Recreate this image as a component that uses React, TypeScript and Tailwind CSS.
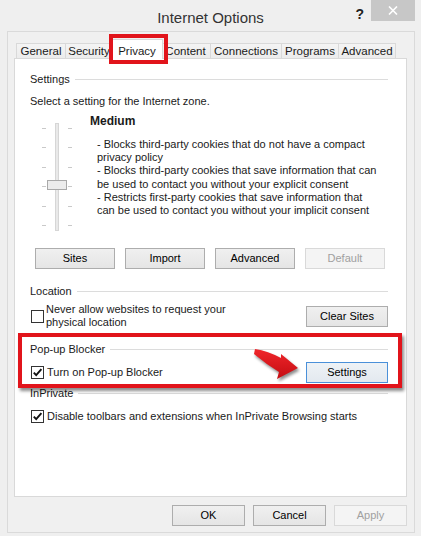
import React from 'react';

const font = "font-['Liberation_Sans',Arial,sans-serif]";

const tabs = ['General', 'Security', 'Privacy', 'Content', 'Connections', 'Programs', 'Advanced'];
const tabWidths: Record<string, string> = {
    General: 'w-[50px]',
    Security: 'w-[48px]',
    Privacy: 'w-[52px]',
    Content: 'w-[51px]',
    Connections: 'w-[72px]',
    Programs: 'w-[58px]',
    Advanced: 'w-[58px]',
};

const GroupHeader = ({ label }: { label: string }) => (
    <div className="flex items-center h-[16px]">
        <span>{label}</span>
        <div className="flex-1 h-px bg-[#dcdcdc] ml-[5px]" />
    </div>
);

const Checkbox = ({ checked }: { checked?: boolean }) => (
    <svg width="13" height="13" viewBox="0 0 13 13" className="shrink-0">
        <rect x="0.5" y="0.5" width="12" height="12" fill="#fff" stroke="#333" />
        {checked && <path d="M2.8 6.6 L5.2 9.2 L10.4 3.2" fill="none" stroke="#111" strokeWidth="1.9" />}
    </svg>
);

const Button = ({ label, className = '', disabled, focused }: { label: string; className?: string; disabled?: boolean; focused?: boolean }) => {
    let look = 'border-[#adadad] bg-gradient-to-b from-[#f0f0f0] to-[#e5e5e5] text-black';
    if (disabled) look = 'border-[#d9d9d9] bg-[#f4f4f4] text-[#a0a0a0]';
    if (focused) look = 'border-[#4a90d9] bg-gradient-to-b from-[#eef2f6] to-[#e3e9ef] text-black';
    return (
        <div className={`h-[21px] border flex items-center justify-center text-[11px] ${look} ${className}`}>{label}</div>
    );
};

const Slider = () => {
    const ticks = [5, 24, 44, 63, 83, 102];
    return (
        <svg width="60" height="110" viewBox="0 0 60 110">
            {ticks.map(t => (
                <g key={t}>
                    <line x1="12" y1={t + 0.5} x2="16" y2={t + 0.5} stroke="#c9c9c9" />
                    <line x1="38" y1={t + 0.5} x2="42" y2={t + 0.5} stroke="#c9c9c9" />
                </g>
            ))}
            <rect x="25.5" y="0.5" width="3" height="107" fill="#e9e9e9" stroke="#d6d6d6" />
            <rect x="17.5" y="57.5" width="19" height="9" fill="#ececec" stroke="#a9a9a9" />
        </svg>
    );
};

export default function App() {
    return (
        <div className={`relative w-[421px] h-[536px] bg-[#efefef] text-[11px] text-[#1a1a1a] ${font}`}>
            {/* title bar */}
            <div className="h-[31px] grid grid-cols-[1fr_auto_1fr]">
                <div />
                <div className="text-[15px] text-[#333] pt-[7px]">Internet Options</div>
                <div className="flex justify-end items-start pr-[6px]">
                    <span className="text-[14px] font-bold text-[#222] mt-[4px] mr-[7px]">?</span>
                    <div className="w-[44px] h-[21px] bg-[#c7c7c7] flex items-center justify-center">
                        <svg width="10" height="9" viewBox="0 0 10 9">
                            <path d="M1 0.5 L9 8.5 M9 0.5 L1 8.5" stroke="#fff" strokeWidth="1.6" />
                        </svg>
                    </div>
                </div>
            </div>

            {/* client area */}
            <div className="ml-[7px] w-[408px] h-[502px] border border-[#dadada] bg-[#f0f0f0] flex flex-col">
                <div className="mt-[11px] pl-[8px] h-[16px] flex items-end">
                    {tabs.map(tab =>
                        tab === 'Privacy' ? (
                            <div
                                key={tab}
                                className={`relative z-10 h-[20px] -mx-[2px] ${tabWidths[tab]} bg-white border border-b-0 border-[#d9d9d9] flex items-start justify-center pt-[3px] text-[11.5px]`}
                            >
                                {tab}
                            </div>
                        ) : (
                            <div
                                key={tab}
                                className={`h-[16px] -ml-px first:ml-0 ${tabWidths[tab]} bg-gradient-to-b from-[#f4f4f4] to-[#ebebeb] border border-b-0 border-[#d9d9d9] flex items-center justify-center text-[11.5px]`}
                            >
                                {tab}
                            </div>
                        )
                    )}
                </div>

                {/* tab panel */}
                <div className="-mt-px ml-[6px] w-[393px] h-[439px] border border-[#d9d9d9] bg-white pt-[12px] pl-[15px] pr-[18px]">
                    <GroupHeader label="Settings" />
                    <div className="mt-[6px] h-[16px] flex items-center">Select a setting for the Internet zone.</div>

                    <div className="flex h-[125px] mt-[2px]">
                        <div className="w-[60px] pt-[12px]">
                            <Slider />
                        </div>
                        <div className="pt-[2px]">
                            <div className="h-[16px] flex items-center font-bold text-[12px]">Medium</div>
                            <div className="mt-[9px] pl-[7px] leading-[13.2px]">
                                <div>- Blocks third-party cookies that do not have a compact</div>
                                <div>privacy policy</div>
                                <div>- Blocks third-party cookies that save information that can</div>
                                <div>be used to contact you without your explicit consent</div>
                                <div>- Restricts first-party cookies that save information that</div>
                                <div>can be used to contact you without your implicit consent</div>
                            </div>
                        </div>
                    </div>

                    <div className="mt-[12px] ml-[5px] flex gap-[10px]">
                        <Button label="Sites" className="w-[80px]" />
                        <Button label="Import" className="w-[80px]" />
                        <Button label="Advanced" className="w-[80px]" />
                        <Button label="Default" className="w-[80px]" disabled />
                    </div>

                    <div className="mt-[14px]">
                        <GroupHeader label="Location" />
                    </div>
                    <div className="mt-[6px] h-[22px] flex items-center justify-between">
                        <div className="flex items-center ml-[1px] gap-[2px]">
                            <Checkbox />
                            <div className="leading-[13px]">
                                <div>Never allow websites to request your</div>
                                <div>physical location</div>
                            </div>
                        </div>
                        <Button label="Clear Sites" className="w-[82px]" />
                    </div>

                    <div className="mt-[14px]">
                        <GroupHeader label="Pop-up Blocker" />
                    </div>
                    <div className="mt-[5px] flex items-center justify-between">
                        <div className="flex items-center ml-[1px] gap-[3px]">
                            <Checkbox checked />
                            <span>Turn on Pop-up Blocker</span>
                        </div>
                        <Button label="Settings" className="w-[82px]" focused />
                    </div>

                    <div className="mt-[2px]">
                        <GroupHeader label="InPrivate" />
                    </div>
                    <div className="mt-[7px] h-[16px] flex items-center ml-[1px] gap-[3px]">
                        <Checkbox checked />
                        <span>Disable toolbars and extensions when InPrivate Browsing starts</span>
                    </div>
                </div>

                <div className="mt-[8px] flex justify-end pr-[7px] gap-[8px]">
                    <Button label="OK" className="w-[73px]" />
                    <Button label="Cancel" className="w-[73px]" />
                    <Button label="Apply" className="w-[73px]" disabled />
                </div>
            </div>

            {/* annotations */}
            <div className="absolute left-[109px] top-[34px] w-[59px] h-[30px] border-[4px] border-[#e1141b] z-20" />
            <div className="absolute left-[18px] top-[333px] w-[384px] h-[55px] border-[4px] border-[#e1141b] shadow-[2px_3px_3px_rgba(0,0,0,0.45)] z-20" />
            <svg className="absolute left-[245px] top-[340px] z-20" width="70" height="50" viewBox="245 340 70 50">
                <defs>
                    <filter id="sh" x="-20%" y="-20%" width="150%" height="160%">
                        <feGaussianBlur stdDeviation="1.4" />
                    </filter>
                    <linearGradient id="rg" x1="0" y1="0" x2="0" y2="1">
                        <stop offset="0" stopColor="#f0262b" />
                        <stop offset="1" stopColor="#c40d12" />
                    </linearGradient>
                </defs>
                <path
                    d="M255 349 Q268 351 281 358 L281 354 L298 368 L277 379 L279 372 Q266 364 254 354 Z"
                    fill="#000"
                    opacity="0.45"
                    transform="translate(1.5 2.5)"
                    filter="url(#sh)"
                />
                <path d="M255 349 Q268 351 281 358 L281 354 L298 368 L277 379 L279 372 Q266 364 254 354 Z" fill="url(#rg)" />
            </svg>
        </div>
    );
}
